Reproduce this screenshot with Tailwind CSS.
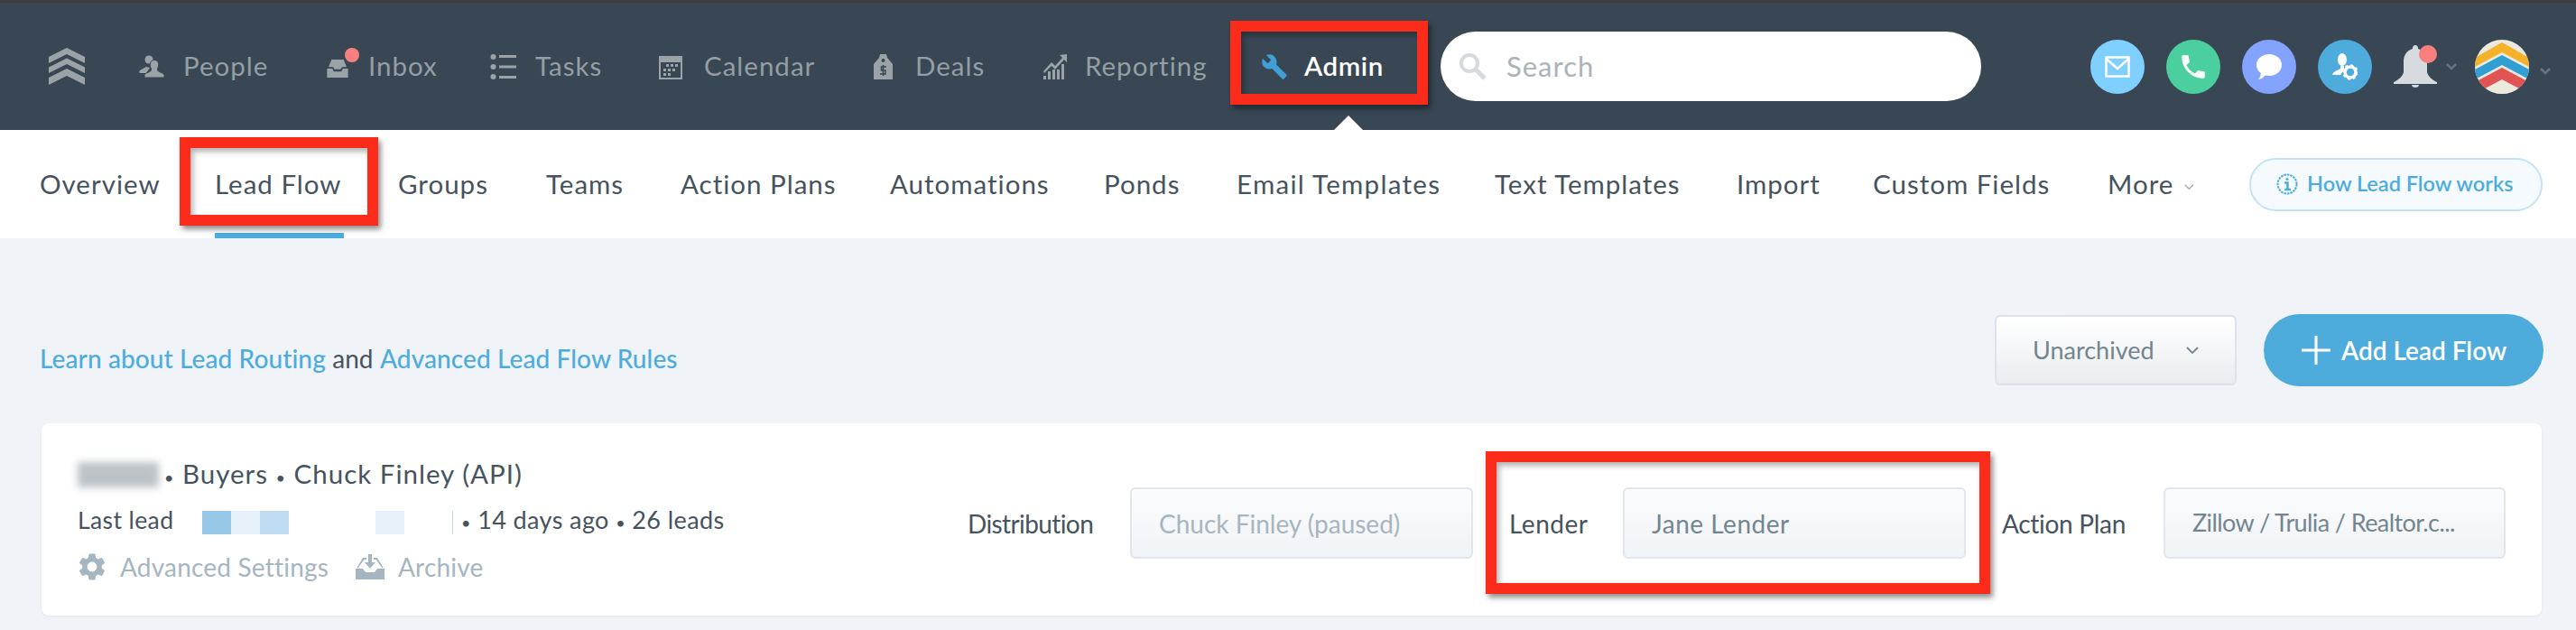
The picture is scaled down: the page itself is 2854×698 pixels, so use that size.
<!DOCTYPE html>
<html lang="en">
<head>
    <meta charset="UTF-8">
    <meta name="viewport" content="width=device-width, initial-scale=1.0">
    <title>Lead Flow</title>
    <script src="https://cdn.jsdelivr.net/npm/@tailwindcss/browser@4"></script>
</head>
<body class="bg-[#f0f3f8] font-[Lato,sans-serif]">
<div class="relative w-[2854px] h-[698px] overflow-hidden">

    <!-- top nav -->
    <header class="flex items-center h-[144px] pl-[54px] bg-[#384753] border-t-[3px] border-[#3c3c3c] text-[29.500px] text-[#949ea4] tracking-[1px] whitespace-nowrap">
        <svg class="w-[40px] h-[41px] mr-[60px] shrink-0" viewBox="0 0 40 41" fill="#9aa3a8"><path d="M20 0 40 10V17L20 7 0 17V10Z"/><path d="M20 11.500 40 21.500V28L20 18 0 28V21.500Z"/><path d="M20 23 40 33V41L20 31 0 41V33Z"/></svg>

        <a class="flex items-center w-[206px] shrink-0">
            <svg class="w-[28px] h-[25px] mr-[21px]" viewBox="0 0 28 25" fill="#9aa3a8"><circle cx="11" cy="5" r="4.500"/><path d="M0 19C1 16 5 15 8 13L12 14 8 20H1Z"/><path d="M6 25V22.500C6 20 11 19.500 13.500 17V15C11.500 12 11.500 5.500 17 5.500S22.500 12 20.500 15V17C23 19.500 28 20 28 22.500V25Z" stroke="#384753" stroke-width="1"/></svg>
            <span>People</span>
        </a>
        <a class="flex items-center w-[183px] shrink-0 relative">
            <svg class="w-[28px] h-[20px] mr-[20px] mt-[4px]" viewBox="0 0 28 24" fill="#9aa3a8"><path d="M6 0H22L26 10H20L18 13H10L8 10H2Z"/><path d="M0 12H7L9 16H19L21 12H28V24H0Z"/></svg>
            <span class="absolute left-[22px] top-[2px] w-[16px] h-[16px] rounded-full bg-[#fa8080]"></span>
            <span>Inbox</span>
        </a>
        <a class="flex items-center w-[187px] shrink-0">
            <svg class="w-[29px] h-[28px] mr-[21px]" viewBox="0 0 29 28" fill="#9aa3a8"><circle cx="3.500" cy="3" r="3"/><circle cx="3.500" cy="14" r="3"/><circle cx="3.500" cy="25" r="3"/><rect x="10" y="1" width="19" height="3"/><rect x="10" y="12.500" width="19" height="3"/><rect x="10" y="24" width="19" height="3"/></svg>
            <span>Tasks</span>
        </a>
        <a class="flex items-center w-[238px] shrink-0">
            <svg class="w-[26px] h-[28px] mr-[24px]" viewBox="0 0 26 28"><path fill="#9aa3a8" d="M0 2H26V28H0Z"/><rect x="2" y="9" width="22" height="17" fill="#384753"/><path fill="#9aa3a8" d="M8 11h3v3H8zM13 11h3v3h-3zM18 11h3v3h-3zM5 16h3v3H5zM10 16h3v3h-3zM15 16h3v3h-3zM5 21h3v3H5zM10 21h3v3h-3z"/></svg>
            <span>Calendar</span>
        </a>
        <a class="flex items-center w-[188px] shrink-0">
            <svg class="w-[21px] h-[28px] mr-[25px]" viewBox="0 0 21 28"><path fill="#9aa3a8" d="M7 0H14L15 4 21 11V28H0V11L6 4Z"/><circle cx="10.500" cy="7" r="2" fill="#384753"/><path fill="none" stroke="#384753" stroke-width="1.500" d="M14 14H8.500V18H13V22H7M10.500 12V24"/></svg>
            <span>Deals</span>
        </a>
        <a class="flex items-center w-[207px] shrink-0">
            <svg class="w-[26px] h-[28px] mr-[20px]" viewBox="0 0 26 28" fill="#9aa3a8"><path d="M26 0V9L23 6 13 17 9 13 1 21 0 19 9 9 13 13 21 4 18 1Z"/><path d="M0 24h3v4H0zM5 19h3v9H5zM10 17h3v11h-3zM15 17h3v11h-3zM20 11h3v17h-3z"/></svg>
            <span>Reporting</span>
        </a>
        <a class="relative flex items-center w-[219px] pl-[34px] h-full text-white font-semibold shrink-0 tracking-[0.6px]">
            <svg class="w-[30px] h-[30px] mr-[18px]" viewBox="0 0 24 24" fill="#3f9fd6"><path d="M22.700 19l-9.100-9.100c.9-2.300.4-5-1.500-6.900-2-2-5-2.400-7.400-1.300L9 6 6 9 1.600 4.700C.4 7.100.9 10.100 2.900 12.100c1.900 1.900 4.600 2.400 6.900 1.500l9.100 9.100c.4.4 1 .4 1.400 0l2.300-2.300c.5-.4.5-1.100.1-1.400z"/></svg>
            <span>Admin</span>
            <svg class="absolute left-[115px] bottom-0 w-[32px] h-[16px]" viewBox="0 0 32 16" fill="#fff"><path d="M16 0 32 16H0Z"/></svg>
        </a>

        <div class="flex items-center ml-[14px] w-[599px] h-[77px] rounded-full bg-white pl-[20px] shrink-0 tracking-normal">
            <svg class="w-[31px] h-[31px] mr-[22px]" viewBox="0 0 31 31" fill="none" stroke="#d5dade" stroke-width="4"><circle cx="12" cy="12" r="9"/><path stroke-width="5" d="M18 18 29 29"/></svg>
            <span class="text-[#aab3ba] text-[31px] tracking-[1px]">Search</span>
        </div>

        <div class="flex items-center ml-[121px] gap-[24px]">
            <span class="flex items-center justify-center w-[60px] h-[60px] rounded-full bg-[#7fcfff]">
                <svg class="w-[28px] h-[24px]" viewBox="0 0 28 24" fill="none" stroke="#fff" stroke-width="2.500"><rect x="1.500" y="1.500" width="25" height="21"/><path d="M1.500 3 14 14 26.500 3"/></svg>
            </span>
            <span class="flex items-center justify-center w-[60px] h-[60px] rounded-full bg-[#4bcf9f]">
                <svg class="w-[34px] h-[34px]" viewBox="0 0 24 24" fill="#fff"><path d="M6.620 10.790c1.440 2.830 3.760 5.140 6.590 6.590l2.200-2.200c.27-.27.67-.36 1.020-.24 1.120.37 2.330.57 3.570.57.55 0 1 .45 1 1V20c0 .55-.45 1-1 1-9.390 0-17-7.610-17-17 0-.55.45-1 1-1h3.500c.55 0 1 .45 1 1 0 1.250.2 2.450.57 3.570.11.35.03.74-.25 1.020l-2.200 2.200z"/></svg>
            </span>
            <span class="flex items-center justify-center w-[60px] h-[60px] rounded-full bg-[#84a3ff]">
                <svg class="w-[30px] h-[28px]" viewBox="0 0 30 28" fill="#fff"><ellipse cx="15" cy="12" rx="14" ry="12"/><path d="M6 19 9 22 11 23 7 27 3 28C5 26 6 23 6 19Z"/></svg>
            </span>
            <span class="flex items-center justify-center w-[60px] h-[60px] rounded-full bg-[#4eacdd]">
                <svg class="w-[28px] h-[30px]" viewBox="0 0 28 30" fill="#fff"><ellipse cx="11" cy="7" rx="5" ry="7"/><path d="M9 14H13V18L9 24H0C1 20 6 19 9 17Z"/><circle cx="20" cy="21" r="6" fill="none" stroke="#fff" stroke-width="3.500"/><circle cx="20" cy="21" r="8" fill="none" stroke="#fff" stroke-width="1.500" stroke-dasharray="3 3.300"/></svg>
            </span>
        </div>
        <div class="relative ml-[24px] w-[48px] h-[48px] shrink-0">
            <svg class="w-[48px] h-[48px]" viewBox="0 0 48 48" fill="#d5dbdf"><path d="M24 0C27 0 27 3 27 4 34 6 37 12 37 18V30C38 35 44 39 48 41V43H0V41C4 39 10 35 11 30V18C11 12 14 6 21 4 21 3 21 0 24 0Z"/><path d="M20 44H28C28 48 20 48 20 44Z"/></svg>
            <span class="absolute left-[28px] top-0 w-[20px] h-[20px] rounded-full bg-[#fa8080]"></span>
        </div>
        <svg class="w-[12px] h-[8px] ml-[10px] shrink-0" viewBox="0 0 12 8" fill="none" stroke="#66747e" stroke-width="2.500"><path d="M1 1 6 6 11 1"/></svg>
        <svg class="w-[60px] h-[60px] ml-[20px] shrink-0" viewBox="0 0 60 60">
            <defs><clipPath id="avatar-clip"><circle cx="30" cy="30" r="30"/></clipPath></defs>
            <g clip-path="url(#avatar-clip)">
                <rect width="60" height="60" fill="#ece9df"/>
                <path fill="#f5b12a" d="M30 3 60 20V30L30 14 0 30V20Z"/>
                <path fill="#2f9fd4" d="M30 17 60 33V44L30 28 0 44V33Z"/>
                <path fill="#e25454" d="M30 31 60 47V60L30 44 0 60V47Z"/>
                <path fill="#ece9df" d="M30 47 60 62H0Z"/>
            </g>
        </svg>
        <svg class="w-[12px] h-[8px] ml-[12px] mt-[10px] shrink-0" viewBox="0 0 12 8" fill="none" stroke="#66747e" stroke-width="2.500"><path d="M1 1 6 6 11 1"/></svg>
    </header>

    <!-- sub nav -->
    <nav class="flex items-center h-[120px] pl-[44px] bg-white text-[29.500px] text-[#46535e] whitespace-nowrap tracking-[1px]">
        <a class="w-[133px] mr-[61px]">Overview</a>
        <a class="relative w-[143px] mr-[60px] h-full flex items-center">Lead Flow<span class="absolute left-0 right-0 bottom-0 h-[6px] bg-[#4eacdd]"></span></a>
        <a class="w-[102px] mr-[62px]">Groups</a>
        <a class="w-[87px] mr-[62px]">Teams</a>
        <a class="w-[171px] mr-[61px]">Action Plans</a>
        <a class="w-[176px] mr-[61px]">Automations</a>
        <a class="w-[87px] mr-[60px]">Ponds</a>
        <a class="w-[227px] mr-[59px] tracking-[1.300px]">Email Templates</a>
        <a class="w-[208px] mr-[60px]">Text Templates</a>
        <a class="w-[91px] mr-[60px]">Import</a>
        <a class="w-[198px] mr-[62px]">Custom Fields</a>
        <a class="flex items-center w-[96px] mr-[61px]">More
            <svg class="w-[14px] h-[9px] ml-[12px] mt-[6px]" viewBox="0 0 14 9" fill="none" stroke="#9aa5ad" stroke-width="1.800"><path d="M1 1 7 7 13 1"/></svg>
        </a>
        <a class="flex items-center w-[325px] h-[59px] pl-[28px] rounded-full border-2 border-[#c4e3f5] bg-[#f4fafd] text-[23.500px] text-[#4eacdd] font-semibold tracking-normal">
            <svg class="w-[24px] h-[24px] mr-[10px]" viewBox="0 0 24 24" fill="none" stroke="#4eacdd" stroke-width="2"><circle cx="12" cy="12" r="10.500" stroke-dasharray="2.500 1"/><path stroke-width="2.500" d="M9 10.500H12.500V18M9 18H16"/><circle cx="12" cy="6.500" r="1.500" fill="#4eacdd" stroke="none"/></svg>
            How Lead Flow works
        </a>
    </nav>

    <!-- toolbar -->
    <div class="flex items-center justify-between mt-[84px] pl-[44px] pr-[36px] h-[80px]">
        <p class="pt-[18px] text-[28px] text-[#46535e] tracking-[0.1px]">
            <a class="text-[#4eacdd] font-medium">Learn about Lead Routing</a> and <a class="text-[#4eacdd] font-medium">Advanced Lead Flow Rules</a>
        </p>
        <div class="flex items-center gap-[30px]">
            <div class="flex items-center w-[268px] h-[78px] pl-[40px] rounded-md border-2 border-[#dde2e8] bg-gradient-to-b from-white to-[#e9edf0] text-[27px] text-[#73858f]">
                <span class="w-[170px]">Unarchived</span>
                <svg class="w-[14px] h-[9px]" viewBox="0 0 14 9" fill="none" stroke="#73858f" stroke-width="1.800"><path d="M1 1 7 7 13 1"/></svg>
            </div>
            <a class="flex items-center w-[310px] h-[80px] pl-[42px] rounded-full bg-[#4eacdd] text-[28px] text-white font-semibold">
                <svg class="w-[32px] h-[32px] mr-[12px]" viewBox="0 0 32 32" fill="#fff"><path d="M14.500 0H17.500V14.500H32V17.500H17.500V32H14.500V17.500H0V14.500H14.500Z"/></svg>
                Add Lead Flow
            </a>
        </div>
    </div>

    <!-- lead flow card -->
    <div class="flex items-start ml-[46px] mt-[41px] w-[2770px] h-[213px] pl-[40px] pt-[31px] rounded-lg bg-white shadow-[0_1px_3px_rgba(60,80,100,0.08)] text-[28px] text-[#46535e] whitespace-nowrap">
        <div class="w-[986px] shrink-0">
            <div class="flex items-center h-[51px]">
                <span class="w-[90px] h-[28px] bg-[#bcc2c6] blur-[4px]"></span>
                <span class="ml-[6px] text-[29.500px] tracking-[1px]"><span class="text-[18px]">•</span> Buyers <span class="text-[18px]">•</span> Chuck Finley (API)</span>
            </div>
            <div class="flex items-center h-[51px] text-[26.500px] tracking-[0.4px]">
                <span class="w-[109px]">Last lead</span>
                <span class="flex items-center ml-[29px] h-[26px] w-[278px] mt-[4px]">
                    <i class="w-[32px] h-full bg-[#97c8e8]"></i>
                    <i class="w-[32px] h-full bg-[#e6f1f9]"></i>
                    <i class="w-[32px] h-full bg-[#bfdcf2]"></i>
                    <i class="w-[32px] h-full ml-[96px] bg-[#e6f1f9]"></i>
                    <i class="w-[1px] h-full ml-[53px] bg-[#bfdcf2]"></i>
                </span>
                <span class="ml-[9px] text-[27px]"><span class="text-[18px]">•</span> 14 days ago <span class="text-[18px]">•</span> 26 leads</span>
            </div>
            <div class="flex items-center h-[51px] text-[28px] text-[#a5b5c2] tracking-[0.2px]">
                <svg class="w-[36px] h-[36px] mr-[13px] -ml-[2px]" viewBox="0 0 24 24" fill="#a5b5c2"><path d="M19.140 12.940c.04-.3.06-.61.06-.94 0-.32-.02-.64-.07-.94l2.030-1.580c.18-.14.23-.41.12-.61l-1.920-3.320c-.12-.22-.37-.29-.59-.22l-2.390.96c-.5-.38-1.030-.7-1.620-.94l-.36-2.540c-.04-.24-.24-.41-.48-.41h-3.840c-.24 0-.43.17-.47.41l-.36 2.540c-.59.24-1.130.57-1.620.94l-2.390-.96c-.22-.08-.47 0-.59.22L2.740 8.870c-.12.21-.08.47.12.61l2.030 1.580c-.05.3-.09.63-.09.94s.02.64.07.94l-2.030 1.580c-.18.14-.23.41-.12.61l1.920 3.320c.12.22.37.29.59.22l2.390-.96c.5.38 1.030.7 1.620.94l.36 2.540c.05.24.24.41.48.41h3.840c.24 0 .44-.17.47-.41l.36-2.540c.59-.24 1.130-.56 1.620-.94l2.390.96c.22.08.47 0 .59-.22l1.920-3.320c.12-.22.07-.47-.12-.61l-2.010-1.580zM12 15.600c-1.980 0-3.600-1.620-3.600-3.600s1.620-3.600 3.600-3.600 3.600 1.620 3.600 3.600-1.620 3.600-3.600 3.600z"/></svg>
                <span class="w-[261px]">Advanced Settings</span>
                <svg class="w-[32px] h-[28px] mr-[15px]" viewBox="0 0 32 28" fill="#a5b5c2"><path d="M14 0H18V9H22L16 16 10 9H14Z"/><path d="M8 4H12V6H9.500L2 16V14L8 4ZM24 4H20V6H22.500L30 16V14Z"/><path d="M0 16H8L11 20H21L24 16H32V28H0Z"/></svg>
                <span>Archive</span>
            </div>
        </div>

        <div class="flex items-center mt-[40px]">
            <span class="w-[180px] tracking-[-0.6px]">Distribution</span>
            <span class="flex items-center w-[380px] h-[79px] pl-[30px] rounded-md border-2 border-[#e1e6eb] bg-gradient-to-b from-[#fbfcfd] to-[#f0f3f7] text-[#a8b5bf]">Chuck Finley (paused)</span>
            <span class="w-[126px] ml-[40px] tracking-[0.5px]">Lender</span>
            <span class="flex items-center w-[380px] h-[79px] pl-[30px] rounded-md border-2 border-[#e1e6eb] bg-gradient-to-b from-[#fbfcfd] to-[#f0f3f7] text-[#73858f] tracking-[0.5px]">Jane Lender</span>
            <span class="w-[179px] ml-[40px] tracking-[-0.3px]">Action Plan</span>
            <span class="flex items-center w-[379px] h-[79px] pl-[30px] rounded-md border-2 border-[#e1e6eb] bg-gradient-to-b from-[#fbfcfd] to-[#f0f3f7] text-[27px] text-[#73858f] tracking-[-0.6px]">Zillow / Trulia / Realtor.c...</span>
        </div>
    </div>

    <!-- red annotation frames -->
    <div class="absolute left-[1363px] top-[23px] w-[219px] h-[93px] border-[12px] border-[#fc2b1a] shadow-[3px_4px_6px_rgba(0,0,0,0.45),inset_3px_4px_6px_rgba(0,0,0,0.3)]"></div>
    <div class="absolute left-[199px] top-[152px] w-[220px] h-[98px] border-[12px] border-[#fc2b1a] shadow-[3px_4px_6px_rgba(0,0,0,0.45),inset_3px_4px_6px_rgba(0,0,0,0.3)]"></div>
    <div class="absolute left-[1646px] top-[500px] w-[559px] h-[158px] border-[12px] border-[#fc2b1a] shadow-[3px_4px_6px_rgba(0,0,0,0.45),inset_3px_4px_6px_rgba(0,0,0,0.3)]"></div>
</div>
</body>
</html>
